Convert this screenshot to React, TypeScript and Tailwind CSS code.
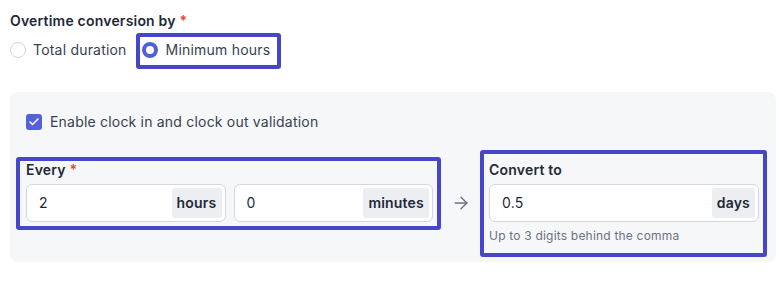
import { ArrowRight, Check } from "lucide-react";

const font = { fontFamily: "Inter, 'Noto Sans', sans-serif" };

function SuffixInput({ value, suffix }: { value: string; suffix: string }) {
  return (
    <div className="flex h-[38px] items-center rounded-md border border-[#d4d7dd] bg-white pl-3 pr-[3px]">
      <span className="flex-1 text-sm text-[#1f2937]">{value}</span>
      <span className="flex h-[30px] items-center rounded-[3px] bg-[#eceef1] px-[5px] text-sm font-semibold text-[#1f2937]">
        {suffix}
      </span>
    </div>
  );
}

export default function App() {
  return (
    <div className="h-[282px] w-[779px] bg-white pl-[10px] pt-[11px] tracking-[0.2px]" style={font}>
      {/* conversion type */}
      <div className="text-sm font-semibold leading-5 text-[#1f2937]">
        Overtime conversion by <span className="text-[#e04545]">*</span>
      </div>
      <div className="mt-[9px] flex h-5 items-center text-sm text-[#374151]">
        <label className="flex items-center gap-[7px]">
          <span className="h-4 w-4 rounded-full border border-[#d1d5db] bg-white" />
          Total duration
        </label>
        <label className="relative ml-[15px] flex items-center gap-2">
          <span className="h-4 w-4 rounded-full border-[4px] border-[#5060d8] bg-white" />
          Minimum hours
          <span className="pointer-events-none absolute -bottom-[9px] -left-[6px] -right-[11px] -top-[7px] rounded-[3px] border-4 border-[#4646cb]" />
        </label>
      </div>

      {/* validation panel */}
      <div className="mt-8 w-[766px] rounded-lg bg-[#f6f7f9] pb-[18px] pl-4 pr-[17px] pt-5">
        <label className="flex h-5 items-center gap-2 text-sm text-[#374151]">
          <span className="flex h-4 w-4 items-center justify-center rounded-[3px] bg-[#5560dc]">
            <Check size={12} strokeWidth={3} className="text-white" />
          </span>
          Enable clock in and clock out validation
        </label>

        <div className="mt-7 flex items-start">
          <div className="relative w-[407px]">
            <div className="text-sm font-semibold leading-5 text-[#1f2937]">
              Every <span className="text-[#e04545]">*</span>
            </div>
            <div className="mt-1 grid grid-cols-2 gap-2">
              <SuffixInput value="2" suffix="hours" />
              <SuffixInput value="0" suffix="minutes" />
            </div>
            <span className="pointer-events-none absolute -bottom-2 -left-[10px] -right-2 -top-[3px] rounded-[3px] border-4 border-[#4646cb]" />
          </div>

          <div className="flex h-[62px] w-[56px] items-end justify-center pb-[9px]">
            <ArrowRight size={20} strokeWidth={1.6} className="text-[#6b7280]" />
          </div>

          <div className="relative w-[270px]">
            <div className="text-sm font-semibold leading-5 text-[#1f2937]">Convert to</div>
            <div className="mt-1">
              <SuffixInput value="0.5" suffix="days" />
            </div>
            <div className="mt-1.5 text-xs leading-4 text-[#6b7280]">Up to 3 digits behind the comma</div>
            <span className="pointer-events-none absolute -bottom-[13px] -left-[9px] -right-2 -top-[10px] rounded-[3px] border-4 border-[#4646cb]" />
          </div>
        </div>
      </div>
    </div>
  );
}
